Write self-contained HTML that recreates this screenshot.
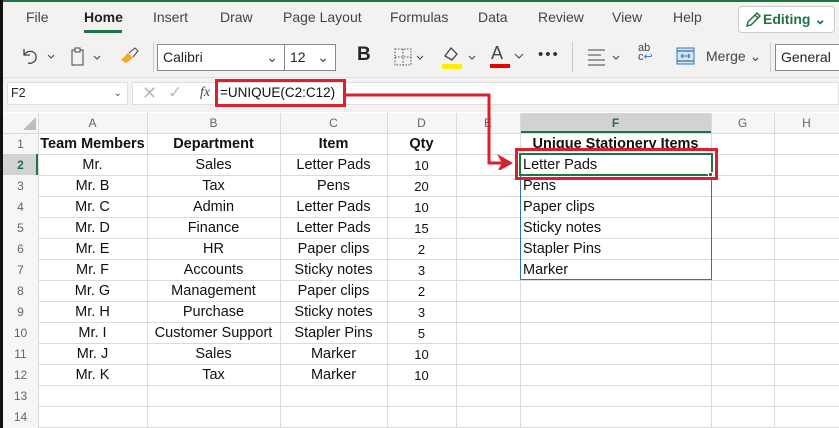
<!DOCTYPE html>
<html><head><style>
*{margin:0;padding:0;box-sizing:border-box}
body{width:839px;height:428px;overflow:hidden;background:#f3f2f1;font-family:"Segoe UI","Liberation Sans",sans-serif;position:relative;color:#252423}
.a{position:absolute}
.tab{position:absolute;top:9px;font-size:14px;color:#444}
.cell{position:absolute;height:21px;line-height:23px;font-size:14.5px;color:#111;text-align:center;white-space:nowrap;font-family:"Liberation Sans",sans-serif}
.rh{position:absolute;left:3px;width:35px;height:21px;line-height:22px;text-align:center;font-size:12px;color:#666}
.ch{position:absolute;top:113px;height:20px;line-height:20px;text-align:center;font-size:12px;color:#666}
.vl{position:absolute;top:113px;width:1px;height:315px;background:#dadada}
.hl{position:absolute;left:38px;width:801px;height:1px;background:#dadada}
</style></head><body>
<div class="a" style="left:0;top:0;width:839px;height:2px;background:#217346"></div>
<div class="a" style="left:0;top:0;width:3px;height:428px;background:#111;z-index:9"></div>
<div class="tab" style="left:26px">File</div>
<div class="tab" style="left:84px;color:#222;font-weight:600">Home</div>
<div class="a" style="left:84px;top:30px;width:38px;height:3px;background:#217346"></div>
<div class="tab" style="left:153px">Insert</div>
<div class="tab" style="left:220px">Draw</div>
<div class="tab" style="left:283px">Page Layout</div>
<div class="tab" style="left:390px">Formulas</div>
<div class="tab" style="left:478px">Data</div>
<div class="tab" style="left:538px">Review</div>
<div class="tab" style="left:612px">View</div>
<div class="tab" style="left:673px">Help</div>
<div class="a" style="left:738px;top:6px;width:97px;height:27px;border:1px solid #ccc;border-radius:4px;background:#fff;color:#217346;font-size:14px;font-weight:600;line-height:25px;padding-left:24px">Editing ⌄</div>
<svg class="a" style="left:744px;top:11px" width="18" height="18"><path d="M3 15l1-4 9-9 3 3-9 9z M11 4l3 3" stroke="#217346" stroke-width="1.5" fill="none"/></svg>
<svg class="a" style="left:20px;top:46px" width="40" height="20"><path d="M4 3v6h6 M4 9c3-5 11-5 12 1s-5 8-8 7" stroke="#444" stroke-width="1.3" fill="none"/><path d="M28 9l3 3 3-3" stroke="#444" fill="none"/></svg>
<svg class="a" style="left:70px;top:46px" width="36" height="22"><rect x="2" y="4" width="11" height="15" fill="none" stroke="#444"/><rect x="5" y="2" width="5" height="4" fill="#fff" stroke="#444"/><path d="M24 10l3 3 3-3" stroke="#444" fill="none"/></svg>
<svg class="a" style="left:118px;top:46px" width="22" height="22"><path d="M3 14l7-7 5 5-7 5z" fill="#f5a623"/><path d="M11 7l6-5 3 3-5 6" stroke="#444" fill="none"/></svg>
<div class="a" style="left:153px;top:42px;width:1px;height:30px;background:#ccc"></div>
<div class="a" style="left:157px;top:44px;width:128px;height:27px;border:1px solid #8a8886;background:#fff;font-size:14px;line-height:25px;padding-left:5px">Calibri<span style="position:absolute;right:6px;color:#444">⌄</span></div>
<div class="a" style="left:284px;top:44px;width:52px;height:27px;border:1px solid #8a8886;background:#fff;font-size:14px;line-height:25px;padding-left:5px">12<span style="position:absolute;right:6px;color:#444">⌄</span></div>
<div class="a" style="left:357px;top:44px;font-size:19px;font-weight:bold;font-family:'Liberation Sans'">B</div>
<svg class="a" style="left:393px;top:47px" width="40" height="22"><rect x="2" y="2" width="16" height="16" fill="none" stroke="#555" stroke-dasharray="1.5 1.5"/><path d="M10 2v16M2 10h16" stroke="#555" stroke-dasharray="1.5 1.5"/><path d="M24 9l3 3 3-3" stroke="#444" fill="none"/></svg>
<svg class="a" style="left:440px;top:44px" width="40" height="26"><path d="M5 12l6-8 6 6-5 6z" fill="none" stroke="#444" stroke-width="1.3"/><rect x="2" y="20" width="20" height="5" fill="#ffed00"/><path d="M29 12l3 3 3-3" stroke="#444" fill="none"/></svg>
<div class="a" style="left:491px;top:43px;font-size:18px;color:#444">A</div>
<div class="a" style="left:490px;top:64px;width:20px;height:4px;background:#e00"></div>
<svg class="a" style="left:514px;top:53px" width="12" height="8"><path d="M1 1l4 4 4-4" stroke="#444" fill="none"/></svg>
<div class="a" style="left:538px;top:46px;font-size:15px;color:#333;letter-spacing:2px">•••</div>
<div class="a" style="left:572px;top:42px;width:1px;height:30px;background:#ccc"></div>
<svg class="a" style="left:586px;top:47px" width="40" height="20"><path d="M2 3h17M2 8h13M2 13h17M2 18h17" stroke="#444"/><path d="M27 9l3 3 3-3" stroke="#444" fill="none"/></svg>
<div class="a" style="left:638px;top:44px;font-size:11px;line-height:9px;color:#444">ab<br>c<span style="color:#2a7ad5">↩</span></div>
<svg class="a" style="left:676px;top:47px" width="20" height="20"><rect x="1" y="1" width="17" height="16" fill="#cfe6f7" stroke="#2a7ad5"/><path d="M1 4h17M1 14h17" stroke="#444"/><path d="M5 9h9M5 9l2-2M5 9l2 2M14 9l-2-2M14 9l-2 2" stroke="#2a7ad5"/></svg>
<div class="a" style="left:706px;top:48px;font-size:14px;color:#444">Merge ⌄</div>
<div class="a" style="left:770px;top:42px;width:1px;height:30px;background:#ccc"></div>
<div class="a" style="left:775px;top:44px;width:70px;height:27px;border:1px solid #8a8886;background:#fff;font-size:14px;line-height:25px;padding-left:5px">General</div>
<div class="a" style="left:0;top:77px;width:839px;height:1px;background:#e1dfdd"></div>
<div class="a" style="left:7px;top:82px;width:121px;height:23px;background:#fff;border:1px solid #e1dfdd;font-size:12.5px;line-height:21px;padding-left:3px">F2<span style="position:absolute;right:5px;font-size:10px;color:#555">⌄</span></div>
<div class="a" style="left:132px;top:82px;width:707px;height:23px;background:#fff;border:1px solid #e1dfdd"></div>
<div class="a" style="left:142px;top:83px;font-size:18px;color:#bbb">✕</div>
<div class="a" style="left:168px;top:83px;font-size:17px;color:#bbb">✓</div>
<div class="a" style="left:200px;top:85px;font-size:14px;font-style:italic;font-family:'Liberation Serif';color:#444">fx</div>
<div class="a" style="left:220px;top:85px;font-size:13.5px;color:#111">=UNIQUE(C2:C12)</div>
<div class="a" style="left:3px;top:112px;width:836px;height:316px;background:#fff"></div>
<div class="a" style="left:3px;top:113px;width:836px;height:20px;background:#f6f6f6"></div>
<div class="a" style="left:3px;top:133px;width:35px;height:295px;background:#f6f6f6"></div>
<svg class="a" style="left:22px;top:116px" width="15" height="15"><path d="M14 1v13H1z" fill="#bdbdbd"/></svg>
<div class="a" style="left:520px;top:113px;width:191px;height:20px;background:#d2d2d2"></div>
<div class="a" style="left:520px;top:131px;width:191px;height:2px;background:#217346"></div>
<div class="a" style="left:3px;top:154px;width:35px;height:21px;background:#d2d2d2"></div>
<div class="a" style="left:36px;top:154px;width:2px;height:21px;background:#217346"></div>
<div class="vl" style="left:38px"></div><div class="vl" style="left:147px"></div><div class="vl" style="left:280px"></div><div class="vl" style="left:387px"></div><div class="vl" style="left:456px"></div><div class="vl" style="left:520px"></div><div class="vl" style="left:711px"></div><div class="vl" style="left:774px"></div>
<div class="hl" style="top:133px;left:3px;width:836px"></div>
<div class="hl" style="top:154px"></div><div class="hl" style="top:175px"></div><div class="hl" style="top:196px"></div><div class="hl" style="top:217px"></div><div class="hl" style="top:238px"></div><div class="hl" style="top:259px"></div><div class="hl" style="top:280px"></div><div class="hl" style="top:301px"></div><div class="hl" style="top:322px"></div><div class="hl" style="top:343px"></div><div class="hl" style="top:364px"></div><div class="hl" style="top:385px"></div><div class="hl" style="top:406px"></div><div class="hl" style="top:427px"></div>
<div class="ch" style="left:38px;width:109px">A</div><div class="ch" style="left:147px;width:133px">B</div><div class="ch" style="left:280px;width:107px">C</div><div class="ch" style="left:387px;width:69px">D</div><div class="ch" style="left:456px;width:64px">E</div><div class="ch" style="left:520px;width:191px;color:#217346;font-weight:bold">F</div><div class="ch" style="left:711px;width:63px">G</div><div class="ch" style="left:774px;width:65px">H</div>
<div class="rh" style="top:133px">1</div><div class="rh" style="top:154px;color:#217346;font-weight:bold">2</div><div class="rh" style="top:175px">3</div><div class="rh" style="top:196px">4</div><div class="rh" style="top:217px">5</div><div class="rh" style="top:238px">6</div><div class="rh" style="top:259px">7</div><div class="rh" style="top:280px">8</div><div class="rh" style="top:301px">9</div><div class="rh" style="top:322px">10</div><div class="rh" style="top:343px">11</div><div class="rh" style="top:364px">12</div><div class="rh" style="top:385px">13</div><div class="rh" style="top:406px">14</div>
<div id="data"></div>
<script>
var rows=[["Team Members","Department","Item","Qty"],["Mr.","Sales","Letter Pads","10"],["Mr. B","Tax","Pens","20"],["Mr. C","Admin","Letter Pads","10"],["Mr. D","Finance","Letter Pads","15"],["Mr. E","HR","Paper clips","2"],["Mr. F","Accounts","Sticky notes","3"],["Mr. G","Management","Paper clips","2"],["Mr. H","Purchase","Sticky notes","3"],["Mr. I","Customer Support","Stapler Pins","5"],["Mr. J","Sales","Marker","10"],["Mr. K","Tax","Marker","10"]];
var cols=[[38,109],[147,133],[280,107],[387,69]];var h="";
rows.forEach(function(r,i){r.forEach(function(t,j){h+='<div class="cell" style="top:'+(133+21*i)+'px;left:'+cols[j][0]+'px;width:'+cols[j][1]+'px;'+(i==0?'font-weight:bold;':'')+(j==3&&i>0?'font-size:13px;':'')+'">'+t+'</div>';});});
h+='<div class="cell" style="top:133px;left:520px;width:191px;font-weight:bold">Unique Stationery Items</div>';
["Letter Pads","Pens","Paper clips","Sticky notes","Stapler Pins","Marker"].forEach(function(t,i){h+='<div class="cell" style="top:'+(154+21*i)+'px;left:523px;text-align:left">'+t+'</div>';});
document.getElementById("data").innerHTML=h;
</script>
<div class="a" style="left:520px;top:154px;width:192px;height:126px;border:1px solid #2f6fc2"></div>
<div class="a" style="left:519px;top:153px;width:194px;height:23px;border:2px solid #217346"></div>
<div class="a" style="left:708px;top:172px;width:5px;height:5px;background:#217346;border:1px solid #fff"></div>
<div class="a" style="left:515px;top:148px;width:203px;height:32px;border:3px solid #d9202e"></div>
<div class="a" style="left:215px;top:79px;width:131px;height:28px;border:3px solid #d9202e"></div>
<svg class="a" style="left:340px;top:90px" width="180" height="80"><path d="M5 5h144v68h14" stroke="#d9202e" stroke-width="3" fill="none"/><path d="M157 64l16 9-16 9 5-9z" fill="#d9202e"/></svg>
</body></html>
